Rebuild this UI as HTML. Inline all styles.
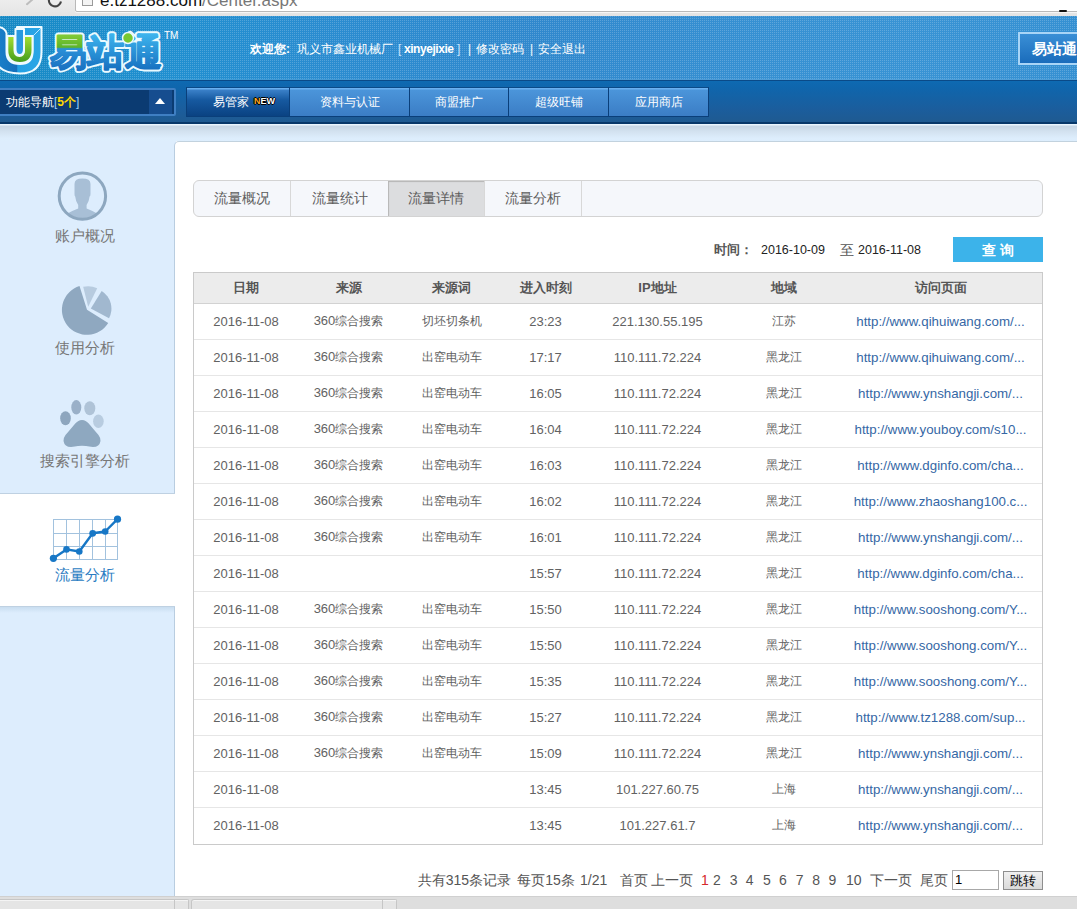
<!DOCTYPE html>
<html><head><meta charset="utf-8">
<style>
*{margin:0;padding:0;box-sizing:border-box}
html,body{width:1077px;height:909px;overflow:hidden;background:#fff;font-family:"Liberation Sans",sans-serif}
.a{position:absolute}
#chrome{left:0;top:0;width:1077px;height:16px;background:linear-gradient(#ededed,#e4e4e4)}
#addr{left:75px;top:-10px;width:1010px;height:22px;background:#fff;border:1px solid #b9b9b9;border-radius:2px;box-shadow:0 1px 0 #f6f6f6}
#url{left:100px;top:-9px;font-size:17px;color:#111;white-space:nowrap;line-height:20px}
#url span{color:#777}
#hdr{left:0;top:16px;width:1077px;height:64px;background:linear-gradient(90deg,#1689c4 0%,#1f8fd0 15%,#2a8cd0 30%,#3088cd 50%,#3690d2 70%,#3893d4 85%,#3590d2 100%)}
#hdrdots{left:0;top:16px}
#band{left:0;top:80px;width:1077px;height:44px;background:linear-gradient(#0a4a88 0px,#0a4a88 1px,#0e6ab2 1px,#0f66ad 7px,#1b5d9c 30px,#1f5a90 43px)}
#bandline{left:0;top:122px;width:1077px;height:2px;background:#08386a}
#sub{left:0;top:124px;width:1077px;height:17px;background:linear-gradient(#eaf6ff 0px,#eaf6ff 1px,#c6d6e5 2px,#d2e1ef 7px,#ddedfc 14px,#ddeefd 17px)}
#side{left:0;top:141px;width:176px;height:755px;background:#ddedfd}
#panel{left:174px;top:141px;width:910px;height:760px;background:#fff;border-top:1px solid #c2d2de;border-left:1px solid #b9cde0;border-top-left-radius:5px}
#welcome{left:250px;top:42px;font-size:12px;color:#fff;white-space:nowrap;line-height:14px}
#welcome b{font-weight:bold}
.wl{top:42px;font-size:12px;color:#fff;white-space:nowrap;line-height:14px}
#ezt{left:1018px;top:32px;width:70px;height:33px;border:2px solid #a9d5f7;background:linear-gradient(#3a8fd6,#1a6cbb);color:#fff;font-size:15px;font-weight:bold;line-height:29px;padding-left:12px;white-space:nowrap}
#dd{left:-4px;top:88px;width:180px;height:28px;border:2px solid #3f7fc3;border-radius:2px;background:#0b3b72}
#ddtxt{left:6px;top:95px;font-size:12px;color:#fff;line-height:14px;white-space:nowrap}
#ddtxt b{color:#ffd800}
#ddbtn{left:149px;top:90px;width:23px;height:24px;background:#164d8f}
#ddarr{left:155px;top:98px;width:0;height:0;border-left:5.5px solid transparent;border-right:5.5px solid transparent;border-bottom:6px solid #fff}
.nb{top:87px;height:30px;border:1px solid #0a3f7a;border-top-color:#0a4a88;color:#fff;font-size:12px;line-height:28px;text-align:center;white-space:nowrap;background:linear-gradient(#6ab0f0 0px,#6ab0f0 1px,#4b95da 2px,#3b7dc5 28px)}
.nb.act{background:linear-gradient(#6ab0f0 0px,#6ab0f0 1px,#3a80c8 2px,#1659a0 12px,#0a4282 28px)}
.new{display:inline-block;font-size:9px;font-weight:bold;color:#fff;vertical-align:top;margin-left:5px;margin-top:-1.5px;letter-spacing:0px;transform:scaleX(1.0);transform-origin:left;text-shadow:-1px 0 #000,1px 0 #000,0 -1px #000,0 1px #000}
/* sidebar */
.si{left:0;width:174px;text-align:center;font-size:14.5px;color:#777}
#act{left:0;top:493px;width:175px;height:114px;background:#fff;border-top:1px solid #bfd1e2;border-bottom:1px solid #bfd1e2}
#actsh{left:0;top:607px;width:174px;height:6px;background:linear-gradient(#c9def0,#ddedfd)}
/* tabs */
#tabs{left:193px;top:180px;width:850px;height:37px;border:1px solid #d3d3d3;border-radius:6px;background:#f5f7fb}
.tab{top:0;height:35px;border-right:1px solid #d8d8d8;font-size:14px;color:#5c5c5c;line-height:35px;text-align:center}
.tab.on{background:#dcdddf;box-shadow:inset 1px 1px 1px #b5b5b5}
#time{left:714px;top:242px;font-size:12.5px;color:#222;white-space:nowrap;line-height:16px}
#time b{color:#555;font-size:13px}
#time i{font-style:normal;color:#555;font-size:14px}
#qbtn{left:953px;top:237px;width:90px;height:25px;background:#3cb3ea;color:#fff;font-size:14px;font-weight:bold;text-align:center;line-height:27px;letter-spacing:0px;word-spacing:0px}
/* table */
#tbl{left:193px;top:272px;width:850px;border:1px solid #cacaca;border-collapse:separate;border-spacing:0;font-size:13px;color:#626262}
#tbl td,#tbl th{height:36px;text-align:center;white-space:nowrap;border-bottom:1px solid #e6e6e6;padding:0 0 1px 0;font-weight:normal}
#tbl th{height:31px;background:#ececec;font-weight:bold;border-bottom:1px solid #d2d2d2;color:#555}
#tbl tr:last-child td{border-bottom:none}
#tbl td .c{font-size:12px}
#tbl td.u{color:#3567a5;font-size:13.3px}
.pgt{top:871px;font-size:14px;color:#555;white-space:nowrap;line-height:18px}
.pgt .r{color:#d62a2a}
#pgin{left:952px;top:870px;width:47px;height:20px;border:1px solid #a8a8a8;background:#fff;font-size:13px;line-height:18px;padding-left:2px;color:#000}
#pgbtn{left:1003px;top:871px;width:40px;height:19px;border:1px solid #8e8e8e;background:linear-gradient(#f0f0f0,#dadada);font-size:13px;line-height:17px;text-align:center;color:#000}
#bot{left:0;top:896px;width:1077px;height:13px;background:#dedede;border-top:1px solid #d0d0d0}
</style></head><body>
<div id="chrome" class="a"></div>
<div id="addr" class="a"></div>
<div class="a" style="left:82px;top:-6px;width:11px;height:12px;border:1px solid #9a9a9a;background:#f4f4f4"></div>
<svg class="a" style="left:0;top:0" width="74" height="15"><path d="M27 4.2 L33 -1" stroke="#bdbdbd" stroke-width="2" stroke-linecap="round"/><path d="M49 -1 A6 6 0 0 0 61 1.5" stroke="#444" stroke-width="2.1" fill="none"/></svg>
<div id="url" class="a">e.tz1288.com<span>/Center.aspx</span></div>
<div class="a" style="left:1059px;top:10px;width:8px;height:2px;background:#111;border-radius:1px"></div>

<div id="hdr" class="a"></div>
<svg id="hdrdots" class="a" width="1077" height="64"><defs><pattern id="dp" width="2" height="2" patternUnits="userSpaceOnUse"><rect x="0" y="0" width="1" height="1" fill="#fff" fill-opacity=".2"/></pattern></defs><rect width="1077" height="64" fill="url(#dp)"/><rect y="63" width="1077" height="1" fill="#fff" fill-opacity=".12"/></svg>
<!-- logo -->
<svg class="a" style="left:0;top:20px" width="190" height="60" viewBox="0 20 190 60">
 <defs>
  <linearGradient id="ug" x1="0" y1="0" x2="0" y2="1"><stop offset="0" stop-color="#a8e030"/><stop offset="1" stop-color="#3f9a1c"/></linearGradient>
  <linearGradient id="ub" x1="0" y1="0" x2="1" y2="0"><stop offset="0" stop-color="#1a82cc"/><stop offset=".48" stop-color="#1570bc"/><stop offset=".5" stop-color="#23a0e4"/><stop offset="1" stop-color="#2aa6e6"/></linearGradient>
  <linearGradient id="tg" gradientUnits="userSpaceOnUse" x1="0" y1="32" x2="0" y2="70"><stop offset="0" stop-color="#8cd03a"/><stop offset=".4" stop-color="#5cb42a"/><stop offset=".44" stop-color="#2a90d8"/><stop offset="1" stop-color="#1a70c0"/></linearGradient>
  <linearGradient id="tb" gradientUnits="userSpaceOnUse" x1="0" y1="32" x2="0" y2="70"><stop offset="0" stop-color="#40b8f0"/><stop offset="1" stop-color="#1670c0"/></linearGradient>
 </defs>
 <g stroke="#eefaff" stroke-width="2" stroke-linejoin="round">
  <path d="M-6 27 Q4 26 6.5 33 L6.5 52 Q6.5 64 20 64 Q32.5 64 32.5 52 L32.5 36 L17 36 L17 27 L41.5 27 L41.5 52 Q41.5 73.5 20 73.5 Q-6 73.5 -6 52 Z" fill="url(#ub)"/>
  <path d="M7.3 36 L14.5 36 L14.5 50 Q14.5 56 19.5 56 Q24 56 24 50 L24 36 L32.5 36 L32.5 50 Q32.5 63 20 63 Q7.3 63 7.3 50 Z" fill="url(#ug)"/>
  <path d="M15.5 29 L24 29 L24 49 Q24 55 19.7 55 Q15.5 55 15.5 49 Z" fill="#2a9ae0"/>
 </g>
 <path d="M33 36 L41 28" stroke="#bfe8ff" stroke-width="1"/>
 <g font-family="Liberation Sans" font-weight="900" font-size="37" stroke="#eafaff" stroke-width="5.5" stroke-linejoin="round" fill="#eafaff">
  <text x="50" y="65">易</text><text x="87" y="65">站</text><text x="125" y="65">通</text>
 </g>
 <g font-family="Liberation Sans" font-weight="900" font-size="37" stroke-width="1.6" stroke-linejoin="round">
  <text x="50" y="65" fill="url(#tg)" stroke="url(#tg)">易</text>
  <text x="87" y="65" fill="url(#tb)" stroke="url(#tb)">站</text>
  <text x="125" y="65" fill="url(#tb)" stroke="url(#tb)">通</text>
 </g>
 <circle cx="128" cy="38" r="5.5" fill="#78c832" stroke="#eafaff" stroke-width="1.5"/>
 <text x="164" y="39" font-family="Liberation Sans" font-size="10" fill="#fff">TM</text>
</svg>

<div id="welcome" class="a"><b>欢迎您:</b>&nbsp; 巩义市鑫业机械厂</div>
<div class="a wl" style="left:398px;color:#c8e4ff">[</div>
<div class="a wl" style="left:404px;font-weight:bold;letter-spacing:-0.45px">xinyejixie</div>
<div class="a wl" style="left:457px;color:#c8e4ff">]</div>
<div class="a wl" style="left:468px">|</div>
<div class="a wl" style="left:476px">修改密码</div>
<div class="a wl" style="left:530px">|</div>
<div class="a wl" style="left:538px">安全退出</div>
<div id="ezt" class="a">易站通</div>

<div id="band" class="a"></div>
<div id="bandline" class="a"></div>
<div id="dd" class="a"></div>
<div id="ddbtn" class="a"></div>
<div id="ddarr" class="a"></div>
<div id="ddtxt" class="a">功能导航<span style="color:#9ad0ff">[</span><b>5个</b><span style="color:#9ad0ff">]</span></div>
<div class="a nb act" style="left:186px;width:104px;text-align:left;padding-left:26px">易管家<span class="new"><span style="color:#ffa820">N</span>EW</span></div>
<div class="a nb" style="left:289px;width:121px">资料与认证</div>
<div class="a nb" style="left:409px;width:100px">商盟推广</div>
<div class="a nb" style="left:508px;width:101px">超级旺铺</div>
<div class="a nb" style="left:608px;width:101px">应用商店</div>

<div id="sub" class="a"></div>
<div id="side" class="a"></div>
<div id="panel" class="a"></div>
<div id="act" class="a"></div><div id="actsh" class="a"></div>

<!-- account icon -->
<svg class="a" style="left:56px;top:170px" width="52" height="52" viewBox="0 0 52 52">
 <defs><clipPath id="cc"><circle cx="26.4" cy="26.1" r="23"/></clipPath></defs>
 <g clip-path="url(#cc)" fill="#a8bfd6">
  <path d="M18.5 14 Q18.5 8.6 26.4 8.6 Q34.5 8.6 34.5 14 L34.5 24 Q34.5 26 33.6 26.5 Q33 32 30.6 35 L30.6 38.5 Q36 40.5 42 44 L46 54 L6 54 L10.5 44 Q16.8 40.5 22.2 38.5 L22.2 35 Q19.8 32 19.2 26.5 Q18.5 26 18.5 24 Z"/>
 </g>
 <circle cx="26.4" cy="26.1" r="23.2" fill="none" stroke="#8da7bf" stroke-width="3"/>
</svg>
<div class="a si" style="top:227px;line-height:18px;left:-2px">账户概况</div>
<!-- pie -->
<svg class="a" style="left:45px;top:275px" width="70" height="65" viewBox="0 0 70 65">
 <path d="M42.0 34.8 L63.2 48.0 A25.0 25.0 0 1 1 34.5 11.0 Z" fill="#8fa8c0"/>
 <path d="M45.8 33.6 L56.7 16.1 A20.6 20.6 0 0 1 64.0 43.3 Z" fill="#a1b8cf"/>
 <path d="M43.2 31.8 L38.2 11.8 A20.6 20.6 0 0 1 52.2 13.3 Z" fill="#b7cbdf"/>
</svg>
<div class="a si" style="top:339px;line-height:18px;left:-2px">使用分析</div>
<!-- paw -->
<svg class="a" style="left:50px;top:395px" width="66" height="56" viewBox="0 0 66 56">
 <ellipse cx="15.5" cy="23.2" rx="5.3" ry="7" fill="#8ea6be"/>
 <ellipse cx="26.3" cy="12.3" rx="5" ry="7.3" fill="#9ab0c8"/>
 <ellipse cx="39.8" cy="13.3" rx="5.5" ry="7" fill="#afc3d7"/>
 <ellipse cx="48.4" cy="26.2" rx="5.3" ry="6.8" fill="#b8cce0"/>
 <path d="M32 25 Q28 25 24 30 Q19 36 15.5 40 Q13 43.5 13.5 46 Q14.5 52 21 52 Q25 51.5 28 51 Q32 50.5 36 51 Q39 51.5 43 52 Q49.5 52 50.5 46 Q51 43.5 48.5 40 Q45 36 40 30 Q36 25 32 25 Z" fill="#8ea8c0"/>
</svg>
<div class="a si" style="top:452px;line-height:18px;left:-2px">搜索引擎分析</div>
<!-- flow chart -->
<svg class="a" style="left:46px;top:512px" width="80" height="54" viewBox="0 0 80 54">
 <g stroke="#a2c2de" stroke-width="1" fill="none">
  <rect x="7.5" y="7.5" width="64" height="40"/>
  <path d="M20.5 7.5V47.5M33.5 7.5V47.5M46.5 7.5V47.5M59.5 7.5V47.5M7.5 21.5H71.5M7.5 34.5H71.5"/>
 </g>
 <polyline points="7.4,46.3 20.5,37.4 33.3,39.5 46.7,21.3 59.2,19.5 71.5,7.2" fill="none" stroke="#1777c6" stroke-width="2.4" stroke-linejoin="round"/>
 <g fill="#1777c6">
  <circle cx="7.4" cy="46.3" r="3.6"/><circle cx="20.5" cy="37.4" r="3.3"/><circle cx="33.3" cy="39.5" r="3.3"/>
  <circle cx="46.7" cy="21.3" r="3.4"/><circle cx="59.2" cy="19.5" r="3.3"/><circle cx="71.5" cy="7.2" r="3.6"/>
 </g>
</svg>
<div class="a si" style="top:566px;line-height:18px;left:-2px;color:#2a7cc2">流量分析</div>


<div id="tabs" class="a">
 <div class="a tab" style="left:0;width:97px">流量概况</div>
 <div class="a tab" style="left:97px;width:98px">流量统计</div>
 <div class="a tab on" style="left:194px;width:97px">流量详情</div>
 <div class="a tab" style="left:291px;width:97px">流量分析</div>
</div>
<div class="a" style="left:714px;top:242px;font-size:13px;font-weight:bold;color:#555;line-height:16px;white-space:nowrap">时间：</div>
<div class="a" style="left:761px;top:242px;font-size:12.5px;color:#222;line-height:16px;white-space:nowrap">2016-10-09</div>
<div class="a" style="left:840px;top:242px;font-size:14px;color:#555;line-height:16px;white-space:nowrap">至</div>
<div class="a" style="left:858px;top:242px;font-size:12.5px;color:#222;line-height:16px;white-space:nowrap">2016-11-08</div>
<div id="qbtn" class="a">查 询</div>
<table id="tbl" class="a">
<colgroup><col style="width:104px"><col style="width:101px"><col style="width:105px"><col style="width:83px"><col style="width:141px"><col style="width:111px"><col></colgroup>
<tr><th>日期</th><th>来源</th><th>来源词</th><th>进入时刻</th><th>IP地址</th><th>地域</th><th>访问页面</th></tr>
<tr><td>2016-11-08</td><td>360<span class="c">综合搜索</span></td><td><span class="c">切坯切条机</span></td><td>23:23</td><td>221.130.55.195</td><td><span class="c">江苏</span></td><td class="u">http://www.qihuiwang.com/...</td></tr>
<tr><td>2016-11-08</td><td>360<span class="c">综合搜索</span></td><td><span class="c">出窑电动车</span></td><td>17:17</td><td>110.111.72.224</td><td><span class="c">黑龙江</span></td><td class="u">http://www.qihuiwang.com/...</td></tr>
<tr><td>2016-11-08</td><td>360<span class="c">综合搜索</span></td><td><span class="c">出窑电动车</span></td><td>16:05</td><td>110.111.72.224</td><td><span class="c">黑龙江</span></td><td class="u">http://www.ynshangji.com/...</td></tr>
<tr><td>2016-11-08</td><td>360<span class="c">综合搜索</span></td><td><span class="c">出窑电动车</span></td><td>16:04</td><td>110.111.72.224</td><td><span class="c">黑龙江</span></td><td class="u">http://www.youboy.com/s10...</td></tr>
<tr><td>2016-11-08</td><td>360<span class="c">综合搜索</span></td><td><span class="c">出窑电动车</span></td><td>16:03</td><td>110.111.72.224</td><td><span class="c">黑龙江</span></td><td class="u">http://www.dginfo.com/cha...</td></tr>
<tr><td>2016-11-08</td><td>360<span class="c">综合搜索</span></td><td><span class="c">出窑电动车</span></td><td>16:02</td><td>110.111.72.224</td><td><span class="c">黑龙江</span></td><td class="u">http://www.zhaoshang100.c...</td></tr>
<tr><td>2016-11-08</td><td>360<span class="c">综合搜索</span></td><td><span class="c">出窑电动车</span></td><td>16:01</td><td>110.111.72.224</td><td><span class="c">黑龙江</span></td><td class="u">http://www.ynshangji.com/...</td></tr>
<tr><td>2016-11-08</td><td></td><td></td><td>15:57</td><td>110.111.72.224</td><td><span class="c">黑龙江</span></td><td class="u">http://www.dginfo.com/cha...</td></tr>
<tr><td>2016-11-08</td><td>360<span class="c">综合搜索</span></td><td><span class="c">出窑电动车</span></td><td>15:50</td><td>110.111.72.224</td><td><span class="c">黑龙江</span></td><td class="u">http://www.sooshong.com/Y...</td></tr>
<tr><td>2016-11-08</td><td>360<span class="c">综合搜索</span></td><td><span class="c">出窑电动车</span></td><td>15:50</td><td>110.111.72.224</td><td><span class="c">黑龙江</span></td><td class="u">http://www.sooshong.com/Y...</td></tr>
<tr><td>2016-11-08</td><td>360<span class="c">综合搜索</span></td><td><span class="c">出窑电动车</span></td><td>15:35</td><td>110.111.72.224</td><td><span class="c">黑龙江</span></td><td class="u">http://www.sooshong.com/Y...</td></tr>
<tr><td>2016-11-08</td><td>360<span class="c">综合搜索</span></td><td><span class="c">出窑电动车</span></td><td>15:27</td><td>110.111.72.224</td><td><span class="c">黑龙江</span></td><td class="u">http://www.tz1288.com/sup...</td></tr>
<tr><td>2016-11-08</td><td>360<span class="c">综合搜索</span></td><td><span class="c">出窑电动车</span></td><td>15:09</td><td>110.111.72.224</td><td><span class="c">黑龙江</span></td><td class="u">http://www.ynshangji.com/...</td></tr>
<tr><td>2016-11-08</td><td></td><td></td><td>13:45</td><td>101.227.60.75</td><td><span class="c">上海</span></td><td class="u">http://www.ynshangji.com/...</td></tr>
<tr><td>2016-11-08</td><td></td><td></td><td>13:45</td><td>101.227.61.7</td><td><span class="c">上海</span></td><td class="u">http://www.ynshangji.com/...</td></tr>
</table>
<div class="a pgt" style="left:417.7px">共有315条记录</div><div class="a pgt" style="left:517.2px">每页15条</div><div class="a pgt" style="left:580.0px">1/21</div><div class="a pgt" style="left:619.6px">首页</div><div class="a pgt" style="left:650.6px">上一页</div><div class="a pgt" style="left:701.1px"><span class="r">1</span></div><div class="a pgt" style="left:713.0px">2</div><div class="a pgt" style="left:729.7px">3</div><div class="a pgt" style="left:745.7px">4</div><div class="a pgt" style="left:763.1px">5</div><div class="a pgt" style="left:779.1px">6</div><div class="a pgt" style="left:795.8px">7</div><div class="a pgt" style="left:812.3px">8</div><div class="a pgt" style="left:828.6px">9</div><div class="a pgt" style="left:846.0px">10</div><div class="a pgt" style="left:869.8px">下一页</div><div class="a pgt" style="left:919.9px">尾页</div>
<div id="pgin" class="a">1</div><div id="pgbtn" class="a">跳转</div>


<div id="bot" class="a"></div>
<div class="a" style="left:0;top:899px;width:175px;height:10px;background:#e5e5e5;border-top:1px solid #c6c6c6;box-shadow:inset 0 1px 0 #f4f4f4"></div>
<div class="a" style="left:174px;top:899px;width:15px;height:10px;background:#e5e5e5;border:1px solid #c6c6c6;border-bottom:none;border-top-right-radius:2px;box-shadow:inset 0 1px 0 #f4f4f4"></div>
<div class="a" style="left:191px;top:899px;width:192px;height:10px;background:#e5e5e5;border:1px solid #c6c6c6;border-bottom:none;border-top-left-radius:3px;box-shadow:inset 0 1px 0 #f4f4f4"></div>
<div class="a" style="left:382px;top:899px;width:15px;height:10px;background:#e5e5e5;border:1px solid #c6c6c6;border-bottom:none;border-top-right-radius:2px;box-shadow:inset 0 1px 0 #f4f4f4"></div>
</body></html>
